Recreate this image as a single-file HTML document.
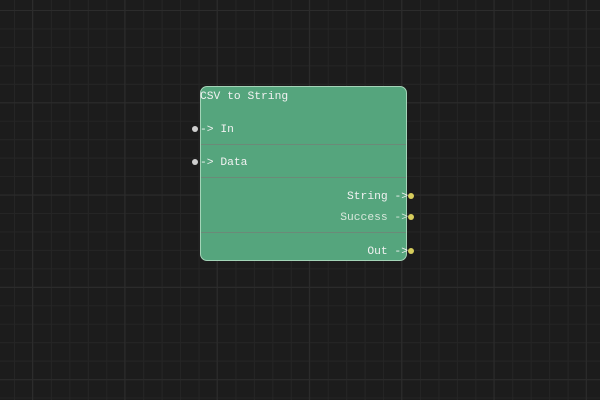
<!DOCTYPE html>
<html><head><style>
html,body{margin:0;padding:0;}
body{width:600px;height:400px;overflow:hidden;background-color:#1c1c1c;
background-image:
linear-gradient(to right,#2c2c2c 1px,transparent 1px),
linear-gradient(to bottom,#2c2c2c 1px,transparent 1px),
linear-gradient(to right,#252525 1px,transparent 1px),
linear-gradient(to bottom,#252525 1px,transparent 1px);
background-size:92.3px 92.3px,92.3px 92.3px,18.46px 18.46px,18.46px 18.46px;
background-position:32px 0,0 10px,14px 0,0 10px;
position:relative;font-family:"Liberation Mono",monospace;font-size:11.3px;color:#f2f2f2;}
.node{position:absolute;left:200px;top:86px;width:207px;height:175px;background:#55a57d;border:1px solid #a4d4b8;border-radius:7px;box-sizing:border-box;}
.t{position:absolute;white-space:pre;line-height:12px;}
.sep{position:absolute;left:201px;width:205px;height:1px;background:#6b8a78;}
.dot{position:absolute;width:6px;height:6px;border-radius:50%;}
.g{background:#cfcfcf}.y{background:#d6cc5c}
</style></head><body>
<div class="node"></div>
<div class="sep" style="top:144px"></div>
<div class="sep" style="top:177px"></div>
<div class="sep" style="top:232px"></div>
<div class="t" style="left:200px;top:91px">CSV to String</div>
<div class="t" style="left:200px;top:124px">-&gt; In</div>
<div class="t" style="left:200px;top:157px">-&gt; Data</div>
<div class="t" style="right:192px;top:191px">String -&gt;</div>
<div class="t" style="right:192px;top:212px;color:#d8e8dc">Success -&gt;</div>
<div class="t" style="right:192px;top:246px">Out -&gt;</div>
<div class="dot g" style="left:192px;top:126px"></div>
<div class="dot g" style="left:192px;top:159px"></div>
<div class="dot y" style="left:408px;top:193px"></div>
<div class="dot y" style="left:408px;top:214px"></div>
<div class="dot y" style="left:408px;top:248px"></div>
</body></html>
